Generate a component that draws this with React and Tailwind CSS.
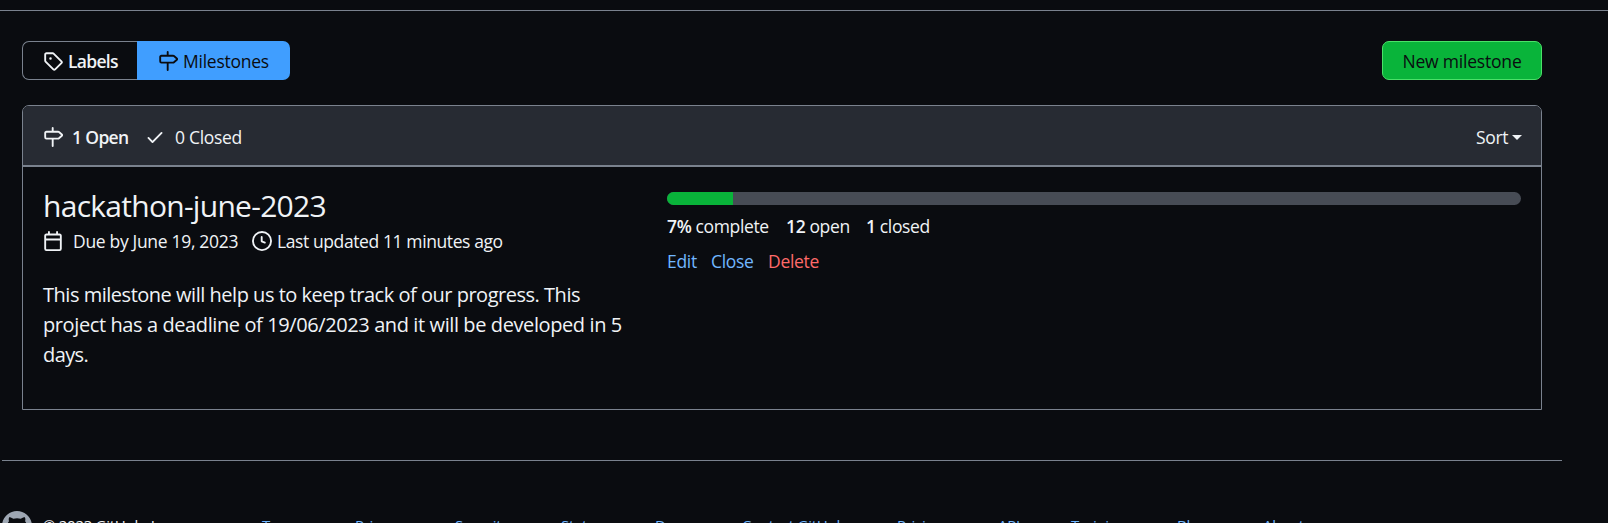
const ICONS = {
  tag: 'M1 7.775V2.75C1 1.784 1.784 1 2.75 1h5.025c.464 0 .91.184 1.238.513l6.25 6.25a1.75 1.75 0 0 1 0 2.474l-5.026 5.026a1.75 1.75 0 0 1-2.474 0l-6.25-6.25A1.752 1.752 0 0 1 1 7.775Zm1.5 0c0 .066.026.13.073.177l6.25 6.25a.25.25 0 0 0 .354 0l5.025-5.025a.25.25 0 0 0 0-.354l-6.25-6.25a.25.25 0 0 0-.177-.073H2.75a.25.25 0 0 0-.25.25ZM6 5a1 1 0 1 1 0 2 1 1 0 0 1 0-2Z',
  milestone: 'M7.75 0a.75.75 0 0 1 .75.75V3h3.634c.414 0 .814.147 1.13.414l2.07 1.75a1.75 1.75 0 0 1 0 2.672l-2.07 1.75a1.75 1.75 0 0 1-1.13.414H8.5v5.25a.75.75 0 0 1-1.5 0V10H2.75A1.75 1.75 0 0 1 1 8.25v-3.5C1 3.784 1.784 3 2.75 3H7V.75A.75.75 0 0 1 7.75 0Zm4.384 8.5a.25.25 0 0 0 .161-.06l2.07-1.75a.248.248 0 0 0 0-.38l-2.07-1.75a.25.25 0 0 0-.161-.06H2.75a.25.25 0 0 0-.25.25v3.5c0 .138.112.25.25.25h9.384Z',
  check: 'M13.78 4.22a.75.75 0 0 1 0 1.06l-7.25 7.25a.75.75 0 0 1-1.06 0L2.22 9.28a.751.751 0 0 1 .018-1.042.751.751 0 0 1 1.042-.018L6 10.94l6.72-6.72a.75.75 0 0 1 1.06 0Z',
  calendar: 'M4.75 0a.75.75 0 0 1 .75.75V2h5V.75a.75.75 0 0 1 1.5 0V2h1.25c.966 0 1.75.784 1.75 1.75v10.5A1.75 1.75 0 0 1 13.25 16H2.75A1.75 1.75 0 0 1 1 14.25V3.75C1 2.784 1.784 2 2.75 2H4V.75A.75.75 0 0 1 4.75 0ZM2.5 7.5v6.75c0 .138.112.25.25.25h10.5a.25.25 0 0 0 .25-.25V7.5Zm10.75-4H2.75a.25.25 0 0 0-.25.25V6h11V3.75a.25.25 0 0 0-.25-.25Z',
  clock: 'M8 0a8 8 0 1 1 0 16A8 8 0 0 1 8 0ZM1.5 8a6.5 6.5 0 1 0 13 0 6.5 6.5 0 0 0-13 0Zm7-3.25v2.992l2.028.812a.75.75 0 0 1-.557 1.392l-2.5-1A.751.751 0 0 1 7 8.25v-3.5a.75.75 0 0 1 1.5 0Z',
  github: 'M8 0c4.42 0 8 3.58 8 8a8.013 8.013 0 0 1-5.45 7.59c-.4.08-.55-.17-.55-.38 0-.27.01-1.13.01-2.2 0-.75-.25-1.23-.54-1.48 1.78-.2 3.65-.88 3.65-3.95 0-.88-.31-1.59-.82-2.15.08-.2.36-1.02-.08-2.12 0 0-.67-.22-2.2.82-.64-.18-1.32-.27-2-.27-.68 0-1.36.09-2 .27-1.53-1.03-2.2-.82-2.2-.82-.44 1.1-.16 1.92-.08 2.12-.51.56-.82 1.28-.82 2.15 0 3.06 1.86 3.75 3.64 3.95-.23.2-.44.55-.51 1.07-.46.21-1.61.55-2.33-.66-.15-.24-.6-.83-1.23-.82-.67.01-.27.38.01.53.34.19.73.9.82 1.13.16.45.68 1.31 2.69.94 0 .67.01 1.3.01 1.49 0 .21-.15.45-.55.38A7.995 7.995 0 0 1 0 8c0-4.42 3.58-8 8-8Z',
};

function Icon({ name, className = 'size-5' }) {
  return (
    <svg viewBox="0 0 16 16" fill="currentColor" aria-hidden="true" className={`shrink-0 ${className}`}>
      <path d={ICONS[name]} />
    </svg>
  );
}

const FOOTER_LINKS = [
  ['Terms', 'w-[93px]'],
  ['Privacy', 'w-[100px]'],
  ['Security', 'w-[106px]'],
  ['Status', 'w-[94px]'],
  ['Docs', 'w-[87px]'],
  ['Contact GitHub', 'w-[155px]'],
  ['Pricing', 'w-[101px]'],
  ['API', 'w-[73px]'],
  ['Training', 'w-[106px]'],
  ['Blog', 'w-[86px]'],
  ['About', 'w-[60px]'],
];

function Toolbar() {
  return (
    <div className="flex h-[39px] justify-between">
      <nav className="flex">
        <a className="flex w-[115px] items-center rounded-l-[7px] border border-r-0 border-[#7a828e] pl-5 font-semibold">
          <Icon name="tag" className="mt-px size-5" />
          <span className="ml-[5px] tracking-[-0.7px]">Labels</span>
        </a>
        <a className="flex w-[153px] items-center rounded-r-[7px] bg-[#409eff] pl-[21px] font-medium text-[#0a0c10]">
          <Icon name="milestone" className="mt-px size-5" />
          <span className="ml-[5px] tracking-[-0.25px]">Milestones</span>
        </a>
      </nav>
      <button className="w-40 rounded-[7px] border border-[#4ae168] bg-[#09b43a] font-medium tracking-[-0.2px] text-[#0a0c10]">
        New milestone
      </button>
    </div>
  );
}

function Milestone() {
  return (
    <div className="flex h-[243px] px-5">
      <div className="w-[624px] pt-5">
        <h2 className="text-[30px] leading-[37px] tracking-[-0.72px]">hackathon-june-2023</h2>
        <div className="flex h-[34px] items-center">
          <Icon name="calendar" />
          <span className="ml-[10px] w-[179px] tracking-[-0.32px]">Due by June 19, 2023</span>
          <Icon name="clock" />
          <span className="ml-[5px] tracking-[-0.4px]">Last updated 11 minutes ago</span>
        </div>
        <p className="mt-[22px] flex flex-col text-xl leading-[30px]">
          <span className="tracking-[-0.48px]">This milestone will help us to keep track of our progress. This</span>
          <span className="tracking-[-0.4px]">project has a deadline of 19/06/2023 and it will be developed in 5</span>
          <span className="tracking-[-0.6px]">days.</span>
        </p>
      </div>
      <div className="grow pt-[25px]">
        <div className="h-[13px] overflow-hidden rounded-[7px] bg-[#474c55]">
          <div className="h-full w-[66px] bg-[#09b43a]" />
        </div>
        <div className="mt-2 flex h-[26px] items-center tracking-[-0.37px]">
          <span className="w-[119px]"><b className="font-semibold">7%</b> complete</span>
          <span className="w-20"><b className="font-semibold">12</b> open</span>
          <span><b className="font-semibold">1</b> closed</span>
        </div>
        <div className="mt-[9px] flex h-[26px] items-center tracking-[-0.3px] text-[#71b7ff]">
          <a className="w-11">Edit</a>
          <a className="w-[57px]">Close</a>
          <a className="text-[#ff6a69]">Delete</a>
        </div>
      </div>
    </div>
  );
}

export default function App() {
  return (
    <div className="h-[523px] overflow-hidden bg-[#0a0c10] font-['Open_Sans','Noto_Sans',sans-serif] text-[17.5px] leading-[26px] text-[#f0f3f6]">
      <div className="h-[11px] border-b border-[#7a828e]" />
      <main className="ml-[22px] w-[1520px] pt-[30px]">
        <Toolbar />
        <section className="mt-[25px] h-[305px] rounded-t-[7px] border border-[#7a828e]">
          <header className="flex h-[61px] items-center rounded-t-[6px] border-b-2 border-[#7a828e] bg-[#272b33] px-5 pt-0.5">
            <Icon name="milestone" />
            <span className="ml-[9px] w-[73px] font-semibold tracking-[-0.65px]">1 Open</span>
            <Icon name="check" />
            <span className="ml-[10px] tracking-[-0.3px]">0 Closed</span>
            <span className="mr-1 ml-auto tracking-[-0.4px]">Sort</span>
            <span className="mt-0.5 -mr-px border-x-5 border-t-5 border-x-transparent border-t-[#f0f3f6]" />
          </header>
          <Milestone />
        </section>
      </main>
      <footer className="mt-[50px] ml-0.5 flex h-[63px] w-[1560px] border-t border-[#7a828e] pt-[50px] text-[15px] leading-[22px] tracking-[-0.28px] whitespace-nowrap">
        <Icon name="github" className="size-[30px] text-[#9ea7b3]" />
        <span className="mt-[3px] ml-[11px] w-[219px]">© 2023 GitHub, Inc.</span>
        <nav className="mt-[3px] flex text-[#71b7ff]">
          {FOOTER_LINKS.map(([label, width]) => (
            <a key={label} className={width}>{label}</a>
          ))}
        </nav>
      </footer>
    </div>
  );
}
